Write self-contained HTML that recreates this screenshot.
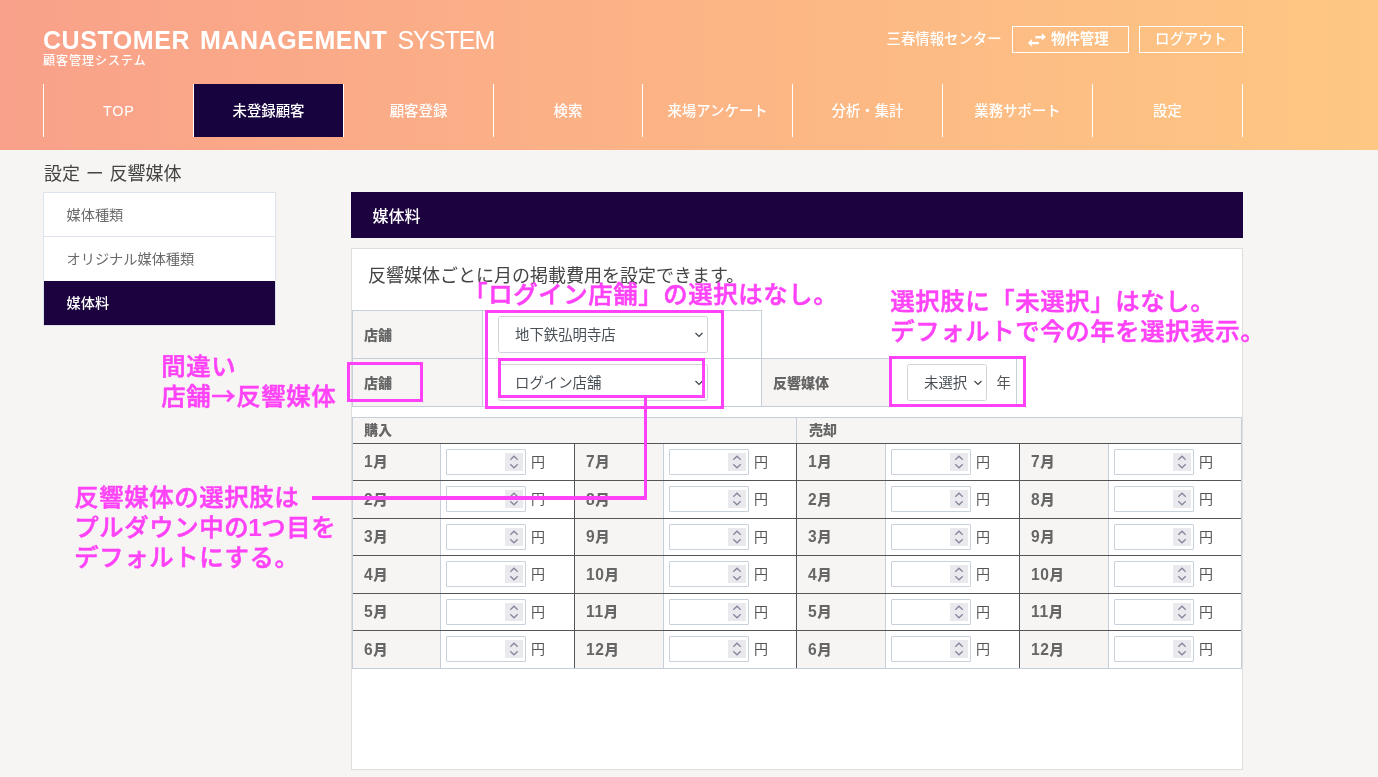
<!DOCTYPE html>
<html lang="ja">
<head>
<meta charset="utf-8">
<title>顧客管理システム</title>
<style>
*{box-sizing:border-box;margin:0;padding:0}
html,body{width:1378px;height:777px;overflow:hidden}
body{position:relative;background:#f7f5f3;font-family:"Liberation Sans","Noto Sans CJK JP",sans-serif;color:#333;font-size:14px}
.abs{position:absolute}
#w{position:absolute;left:0;top:0;width:1378px;height:777px;will-change:transform}
#hdr{left:0;top:0;width:1378px;height:150px;background:linear-gradient(90deg,#f9a18a 0%,#fcb685 55%,#fec783 100%)}
#logo{left:43px;top:26px;color:#fff;font-size:25px;line-height:29px;font-weight:bold;letter-spacing:.55px;word-spacing:2.5px;white-space:nowrap}
#logo span{font-weight:normal;letter-spacing:-1px}
#sub{left:43px;top:54px;color:#fff;font-size:12px;font-weight:500;line-height:14px;letter-spacing:1px;white-space:nowrap}
#uname{left:886.5px;top:29px;color:#fff;font-size:14.4px;font-weight:500;line-height:20px;white-space:nowrap}
.hbtn{top:26px;height:27px;border:1px solid #fff;color:#fff;font-size:14.4px;font-weight:500;line-height:25px;text-align:center;white-space:nowrap}
#nav{left:43px;top:84px;height:53px;width:1200px;border-left:1px solid #fff}
#nav div{position:absolute;top:0;height:53px;width:150px;border-right:1px solid #fff;color:#fff;font-size:14.4px;font-weight:500;line-height:55px;text-align:center}
#nav div.on{background:#17043f}
#ptitle{left:44px;top:161px;font-size:18px;line-height:27px;color:#444;word-spacing:.75px;white-space:nowrap}
#side{left:43px;top:192px;width:233px;height:134px;background:#fff;border:1px solid #dde3ea}
#side div{position:absolute;left:0;width:231px;height:44px;line-height:44px;padding-left:22.5px;color:#6a6a6a;font-size:14.2px}
#side div.on{background:#1c033f;color:#fff;font-weight:500}
#bar{left:351px;top:192px;width:892px;height:46px;background:#1c033f;color:#fff;font-size:16px;font-weight:500;line-height:49px;padding-left:21.5px}
#panel{left:351px;top:248px;width:892px;height:522px;background:#fff;border:1px solid #dedede}
#desc{left:368px;top:263px;font-size:18px;line-height:27px;color:#444;white-space:nowrap}

.ftab{border:1px solid #c6cfd9;background:#fff}
.flab{background:#f7f5f3;color:#666;font-weight:900;font-size:14px;line-height:20px;padding:14px 0 0 11px;border-right:1px solid #c6cfd9}
.sel{border:1px solid #ced4da;border-radius:2.5px;background:#fff;height:37px;color:#495057;font-size:14.4px;line-height:37px;padding-left:16px;white-space:nowrap}
.chev{fill:none;stroke:#3c4248;stroke-width:1.15}
.mh{background:#f7f5f3;color:#666;font-weight:900;font-size:14px;line-height:25px;padding-left:11px;height:26px;top:417px;border-top:1px solid #c6cfd9}
.ml b{font-size:15.6px;letter-spacing:.6px;font-weight:bold}
.ml{background:#f7f5f3;color:#666;font-weight:900;font-size:14.4px;line-height:36px;padding-left:11px;height:37px;width:88px;border-right:1px solid #c6cfd9}
.inp{border:1px solid #c9d2dc;border-radius:1px;background:#fff;width:80px;height:26px}
.spn{background:#e9e9ee;width:18px;height:18px}
.yen{color:#555;font-size:14px;line-height:20px}
.hl{background:#555;height:1px}
.vl{background:#555;width:1px}
.pk{color:#ff42f8;font-weight:500;-webkit-text-stroke:.55px #ff42f8;font-size:24.4px;letter-spacing:.6px;margin-left:.3px;line-height:30px;white-space:nowrap}
.ar{font-family:"Noto Sans CJK JP",sans-serif;line-height:0}
.pb{border:3px solid #ff42f8}
.pf{background:#ff42f8}
</style>
</head>
<body>
<div id="w">
<div id="hdr" class="abs"></div>
<div id="logo" class="abs">CUSTOMER MANAGEMENT <span>SYSTEM</span></div>
<div id="sub" class="abs">顧客管理システム</div>
<div id="uname" class="abs">三春情報センター</div>
<div class="abs hbtn" style="left:1012px;width:117px;font-weight:bold;padding-left:38px;text-align:left">物件管理</div>
<svg class="abs" style="left:1027px;top:32px" width="20" height="16" viewBox="0 0 20 16" fill="#fff"><rect x="8.3" y="4" width="7" height="2.4"/><path d="M14.8 1.1L18.9 5.1L14.8 8.8Z"/><rect x="4.6" y="9.9" width="7.3" height="2.4"/><path d="M4.8 7L0.9 11L4.8 14.8Z"/></svg>
<div class="abs hbtn" style="left:1139px;width:104px">ログアウト</div>
<div id="nav" class="abs">
<div style="left:0;letter-spacing:.8px;text-indent:.8px">TOP</div>
<div style="left:150px" class="on">未登録顧客</div>
<div style="left:300px">顧客登録</div>
<div style="left:450px;width:149px">検索</div>
<div style="left:599px;width:150px">来場アンケート</div>
<div style="left:749px">分析・集計</div>
<div style="left:899px">業務サポート</div>
<div style="left:1049px">設定</div>
</div>
<div id="ptitle" class="abs">設定 ー 反響媒体</div>
<div id="side" class="abs">
<div style="top:0;border-bottom:1px solid #dde3ea">媒体種類</div>
<div style="top:44px">オリジナル媒体種類</div>
<div style="top:88px" class="on">媒体料</div>
</div>
<div id="bar" class="abs">媒体料</div>
<div id="panel" class="abs"></div>
<div id="desc" class="abs">反響媒体ごとに月の掲載費用を設定できます。</div>

<div class="abs ftab" style="left:352px;top:310px;width:410px;height:97px"></div>
<div class="abs ftab" style="left:761px;top:358px;width:256px;height:49px"></div>
<div class="abs" style="left:353px;top:358px;width:664px;height:1px;background:#c6cfd9"></div>
<div class="abs flab" style="left:353px;top:311px;width:130px;height:47px">店舗</div>
<div class="abs flab" style="left:353px;top:359px;width:130px;height:47px">店舗</div>
<div class="abs flab" style="left:762px;top:359px;width:129px;height:47px">反響媒体</div>
<div class="abs sel" style="left:498px;top:316px;width:210px">地下鉄弘明寺店</div>
<div class="abs sel" style="left:498px;top:364px;width:210px">ログイン店舗</div>
<div class="abs sel" style="left:907px;top:364px;width:80px">未選択</div>
<svg class="abs" style="left:694px;top:331px" width="10" height="8" viewBox="0 0 10 8"><path class="chev" d="M1.5 2L5 5.5L8.5 2"/></svg>
<svg class="abs" style="left:694px;top:379px" width="10" height="8" viewBox="0 0 10 8"><path class="chev" d="M1.5 2L5 5.5L8.5 2"/></svg>
<svg class="abs" style="left:973px;top:379px" width="10" height="8" viewBox="0 0 10 8"><path class="chev" d="M1.5 2L5 5.5L8.5 2"/></svg>
<div class="abs yen" style="left:996.5px;top:373px;font-size:14.4px">年</div>

<!--TB-->
<div class="abs" style="left:352px;top:417px;width:890px;height:252px;background:#fff;border:1px solid #c6cfd9"></div>
<div class="abs mh" style="left:353px;width:443px">購入</div>
<div class="abs mh" style="left:796px;width:445px;border-left:1px solid #c6cfd9;padding-left:12px">売却</div>
<div class="abs ml" style="left:353px;top:444px;height:36px;line-height:36px;width:88px"><b>1</b>月</div>
<div class="abs inp" style="left:446px;top:449px"></div>
<div class="abs spn" style="left:505px;top:453px"></div>
<svg class="abs" style="left:509px;top:455px" width="10" height="14" viewBox="0 0 10 14"><path d="M1.3 4.8L5 1.2L8.7 4.8M1.3 9.2L5 12.8L8.7 9.2" fill="none" stroke="#85859a" stroke-width="1.2"/></svg>
<div class="abs yen" style="left:531px;top:452px">円</div>
<div class="abs ml" style="left:575px;top:444px;height:36px;line-height:36px;width:89px"><b>7</b>月</div>
<div class="abs inp" style="left:669px;top:449px"></div>
<div class="abs spn" style="left:728px;top:453px"></div>
<svg class="abs" style="left:732px;top:455px" width="10" height="14" viewBox="0 0 10 14"><path d="M1.3 4.8L5 1.2L8.7 4.8M1.3 9.2L5 12.8L8.7 9.2" fill="none" stroke="#85859a" stroke-width="1.2"/></svg>
<div class="abs yen" style="left:754px;top:452px">円</div>
<div class="abs ml" style="left:797px;top:444px;height:36px;line-height:36px;width:89px"><b>1</b>月</div>
<div class="abs inp" style="left:891px;top:449px"></div>
<div class="abs spn" style="left:950px;top:453px"></div>
<svg class="abs" style="left:954px;top:455px" width="10" height="14" viewBox="0 0 10 14"><path d="M1.3 4.8L5 1.2L8.7 4.8M1.3 9.2L5 12.8L8.7 9.2" fill="none" stroke="#85859a" stroke-width="1.2"/></svg>
<div class="abs yen" style="left:976px;top:452px">円</div>
<div class="abs ml" style="left:1020px;top:444px;height:36px;line-height:36px;width:89px"><b>7</b>月</div>
<div class="abs inp" style="left:1114px;top:449px"></div>
<div class="abs spn" style="left:1173px;top:453px"></div>
<svg class="abs" style="left:1177px;top:455px" width="10" height="14" viewBox="0 0 10 14"><path d="M1.3 4.8L5 1.2L8.7 4.8M1.3 9.2L5 12.8L8.7 9.2" fill="none" stroke="#85859a" stroke-width="1.2"/></svg>
<div class="abs yen" style="left:1199px;top:452px">円</div>
<div class="abs ml" style="left:353px;top:481px;height:37px;line-height:37px;width:88px"><b>2</b>月</div>
<div class="abs inp" style="left:446px;top:486px"></div>
<div class="abs spn" style="left:505px;top:490px"></div>
<svg class="abs" style="left:509px;top:492px" width="10" height="14" viewBox="0 0 10 14"><path d="M1.3 4.8L5 1.2L8.7 4.8M1.3 9.2L5 12.8L8.7 9.2" fill="none" stroke="#85859a" stroke-width="1.2"/></svg>
<div class="abs yen" style="left:531px;top:489px">円</div>
<div class="abs ml" style="left:575px;top:481px;height:37px;line-height:37px;width:89px"><b>8</b>月</div>
<div class="abs inp" style="left:669px;top:486px"></div>
<div class="abs spn" style="left:728px;top:490px"></div>
<svg class="abs" style="left:732px;top:492px" width="10" height="14" viewBox="0 0 10 14"><path d="M1.3 4.8L5 1.2L8.7 4.8M1.3 9.2L5 12.8L8.7 9.2" fill="none" stroke="#85859a" stroke-width="1.2"/></svg>
<div class="abs yen" style="left:754px;top:489px">円</div>
<div class="abs ml" style="left:797px;top:481px;height:37px;line-height:37px;width:89px"><b>2</b>月</div>
<div class="abs inp" style="left:891px;top:486px"></div>
<div class="abs spn" style="left:950px;top:490px"></div>
<svg class="abs" style="left:954px;top:492px" width="10" height="14" viewBox="0 0 10 14"><path d="M1.3 4.8L5 1.2L8.7 4.8M1.3 9.2L5 12.8L8.7 9.2" fill="none" stroke="#85859a" stroke-width="1.2"/></svg>
<div class="abs yen" style="left:976px;top:489px">円</div>
<div class="abs ml" style="left:1020px;top:481px;height:37px;line-height:37px;width:89px"><b>8</b>月</div>
<div class="abs inp" style="left:1114px;top:486px"></div>
<div class="abs spn" style="left:1173px;top:490px"></div>
<svg class="abs" style="left:1177px;top:492px" width="10" height="14" viewBox="0 0 10 14"><path d="M1.3 4.8L5 1.2L8.7 4.8M1.3 9.2L5 12.8L8.7 9.2" fill="none" stroke="#85859a" stroke-width="1.2"/></svg>
<div class="abs yen" style="left:1199px;top:489px">円</div>
<div class="abs ml" style="left:353px;top:519px;height:36px;line-height:36px;width:88px"><b>3</b>月</div>
<div class="abs inp" style="left:446px;top:524px"></div>
<div class="abs spn" style="left:505px;top:528px"></div>
<svg class="abs" style="left:509px;top:530px" width="10" height="14" viewBox="0 0 10 14"><path d="M1.3 4.8L5 1.2L8.7 4.8M1.3 9.2L5 12.8L8.7 9.2" fill="none" stroke="#85859a" stroke-width="1.2"/></svg>
<div class="abs yen" style="left:531px;top:527px">円</div>
<div class="abs ml" style="left:575px;top:519px;height:36px;line-height:36px;width:89px"><b>9</b>月</div>
<div class="abs inp" style="left:669px;top:524px"></div>
<div class="abs spn" style="left:728px;top:528px"></div>
<svg class="abs" style="left:732px;top:530px" width="10" height="14" viewBox="0 0 10 14"><path d="M1.3 4.8L5 1.2L8.7 4.8M1.3 9.2L5 12.8L8.7 9.2" fill="none" stroke="#85859a" stroke-width="1.2"/></svg>
<div class="abs yen" style="left:754px;top:527px">円</div>
<div class="abs ml" style="left:797px;top:519px;height:36px;line-height:36px;width:89px"><b>3</b>月</div>
<div class="abs inp" style="left:891px;top:524px"></div>
<div class="abs spn" style="left:950px;top:528px"></div>
<svg class="abs" style="left:954px;top:530px" width="10" height="14" viewBox="0 0 10 14"><path d="M1.3 4.8L5 1.2L8.7 4.8M1.3 9.2L5 12.8L8.7 9.2" fill="none" stroke="#85859a" stroke-width="1.2"/></svg>
<div class="abs yen" style="left:976px;top:527px">円</div>
<div class="abs ml" style="left:1020px;top:519px;height:36px;line-height:36px;width:89px"><b>9</b>月</div>
<div class="abs inp" style="left:1114px;top:524px"></div>
<div class="abs spn" style="left:1173px;top:528px"></div>
<svg class="abs" style="left:1177px;top:530px" width="10" height="14" viewBox="0 0 10 14"><path d="M1.3 4.8L5 1.2L8.7 4.8M1.3 9.2L5 12.8L8.7 9.2" fill="none" stroke="#85859a" stroke-width="1.2"/></svg>
<div class="abs yen" style="left:1199px;top:527px">円</div>
<div class="abs ml" style="left:353px;top:556px;height:37px;line-height:37px;width:88px"><b>4</b>月</div>
<div class="abs inp" style="left:446px;top:561px"></div>
<div class="abs spn" style="left:505px;top:565px"></div>
<svg class="abs" style="left:509px;top:567px" width="10" height="14" viewBox="0 0 10 14"><path d="M1.3 4.8L5 1.2L8.7 4.8M1.3 9.2L5 12.8L8.7 9.2" fill="none" stroke="#85859a" stroke-width="1.2"/></svg>
<div class="abs yen" style="left:531px;top:564px">円</div>
<div class="abs ml" style="left:575px;top:556px;height:37px;line-height:37px;width:89px"><b>10</b>月</div>
<div class="abs inp" style="left:669px;top:561px"></div>
<div class="abs spn" style="left:728px;top:565px"></div>
<svg class="abs" style="left:732px;top:567px" width="10" height="14" viewBox="0 0 10 14"><path d="M1.3 4.8L5 1.2L8.7 4.8M1.3 9.2L5 12.8L8.7 9.2" fill="none" stroke="#85859a" stroke-width="1.2"/></svg>
<div class="abs yen" style="left:754px;top:564px">円</div>
<div class="abs ml" style="left:797px;top:556px;height:37px;line-height:37px;width:89px"><b>4</b>月</div>
<div class="abs inp" style="left:891px;top:561px"></div>
<div class="abs spn" style="left:950px;top:565px"></div>
<svg class="abs" style="left:954px;top:567px" width="10" height="14" viewBox="0 0 10 14"><path d="M1.3 4.8L5 1.2L8.7 4.8M1.3 9.2L5 12.8L8.7 9.2" fill="none" stroke="#85859a" stroke-width="1.2"/></svg>
<div class="abs yen" style="left:976px;top:564px">円</div>
<div class="abs ml" style="left:1020px;top:556px;height:37px;line-height:37px;width:89px"><b>10</b>月</div>
<div class="abs inp" style="left:1114px;top:561px"></div>
<div class="abs spn" style="left:1173px;top:565px"></div>
<svg class="abs" style="left:1177px;top:567px" width="10" height="14" viewBox="0 0 10 14"><path d="M1.3 4.8L5 1.2L8.7 4.8M1.3 9.2L5 12.8L8.7 9.2" fill="none" stroke="#85859a" stroke-width="1.2"/></svg>
<div class="abs yen" style="left:1199px;top:564px">円</div>
<div class="abs ml" style="left:353px;top:594px;height:36px;line-height:36px;width:88px"><b>5</b>月</div>
<div class="abs inp" style="left:446px;top:599px"></div>
<div class="abs spn" style="left:505px;top:603px"></div>
<svg class="abs" style="left:509px;top:605px" width="10" height="14" viewBox="0 0 10 14"><path d="M1.3 4.8L5 1.2L8.7 4.8M1.3 9.2L5 12.8L8.7 9.2" fill="none" stroke="#85859a" stroke-width="1.2"/></svg>
<div class="abs yen" style="left:531px;top:602px">円</div>
<div class="abs ml" style="left:575px;top:594px;height:36px;line-height:36px;width:89px"><b>11</b>月</div>
<div class="abs inp" style="left:669px;top:599px"></div>
<div class="abs spn" style="left:728px;top:603px"></div>
<svg class="abs" style="left:732px;top:605px" width="10" height="14" viewBox="0 0 10 14"><path d="M1.3 4.8L5 1.2L8.7 4.8M1.3 9.2L5 12.8L8.7 9.2" fill="none" stroke="#85859a" stroke-width="1.2"/></svg>
<div class="abs yen" style="left:754px;top:602px">円</div>
<div class="abs ml" style="left:797px;top:594px;height:36px;line-height:36px;width:89px"><b>5</b>月</div>
<div class="abs inp" style="left:891px;top:599px"></div>
<div class="abs spn" style="left:950px;top:603px"></div>
<svg class="abs" style="left:954px;top:605px" width="10" height="14" viewBox="0 0 10 14"><path d="M1.3 4.8L5 1.2L8.7 4.8M1.3 9.2L5 12.8L8.7 9.2" fill="none" stroke="#85859a" stroke-width="1.2"/></svg>
<div class="abs yen" style="left:976px;top:602px">円</div>
<div class="abs ml" style="left:1020px;top:594px;height:36px;line-height:36px;width:89px"><b>11</b>月</div>
<div class="abs inp" style="left:1114px;top:599px"></div>
<div class="abs spn" style="left:1173px;top:603px"></div>
<svg class="abs" style="left:1177px;top:605px" width="10" height="14" viewBox="0 0 10 14"><path d="M1.3 4.8L5 1.2L8.7 4.8M1.3 9.2L5 12.8L8.7 9.2" fill="none" stroke="#85859a" stroke-width="1.2"/></svg>
<div class="abs yen" style="left:1199px;top:602px">円</div>
<div class="abs ml" style="left:353px;top:631px;height:37px;line-height:37px;width:88px"><b>6</b>月</div>
<div class="abs inp" style="left:446px;top:636px"></div>
<div class="abs spn" style="left:505px;top:640px"></div>
<svg class="abs" style="left:509px;top:642px" width="10" height="14" viewBox="0 0 10 14"><path d="M1.3 4.8L5 1.2L8.7 4.8M1.3 9.2L5 12.8L8.7 9.2" fill="none" stroke="#85859a" stroke-width="1.2"/></svg>
<div class="abs yen" style="left:531px;top:639px">円</div>
<div class="abs ml" style="left:575px;top:631px;height:37px;line-height:37px;width:89px"><b>12</b>月</div>
<div class="abs inp" style="left:669px;top:636px"></div>
<div class="abs spn" style="left:728px;top:640px"></div>
<svg class="abs" style="left:732px;top:642px" width="10" height="14" viewBox="0 0 10 14"><path d="M1.3 4.8L5 1.2L8.7 4.8M1.3 9.2L5 12.8L8.7 9.2" fill="none" stroke="#85859a" stroke-width="1.2"/></svg>
<div class="abs yen" style="left:754px;top:639px">円</div>
<div class="abs ml" style="left:797px;top:631px;height:37px;line-height:37px;width:89px"><b>6</b>月</div>
<div class="abs inp" style="left:891px;top:636px"></div>
<div class="abs spn" style="left:950px;top:640px"></div>
<svg class="abs" style="left:954px;top:642px" width="10" height="14" viewBox="0 0 10 14"><path d="M1.3 4.8L5 1.2L8.7 4.8M1.3 9.2L5 12.8L8.7 9.2" fill="none" stroke="#85859a" stroke-width="1.2"/></svg>
<div class="abs yen" style="left:976px;top:639px">円</div>
<div class="abs ml" style="left:1020px;top:631px;height:37px;line-height:37px;width:89px"><b>12</b>月</div>
<div class="abs inp" style="left:1114px;top:636px"></div>
<div class="abs spn" style="left:1173px;top:640px"></div>
<svg class="abs" style="left:1177px;top:642px" width="10" height="14" viewBox="0 0 10 14"><path d="M1.3 4.8L5 1.2L8.7 4.8M1.3 9.2L5 12.8L8.7 9.2" fill="none" stroke="#85859a" stroke-width="1.2"/></svg>
<div class="abs yen" style="left:1199px;top:639px">円</div>
<div class="abs hl" style="left:353px;top:443px;width:888px"></div>
<div class="abs hl" style="left:353px;top:480px;width:888px"></div>
<div class="abs hl" style="left:353px;top:518px;width:888px"></div>
<div class="abs hl" style="left:353px;top:555px;width:888px"></div>
<div class="abs hl" style="left:353px;top:593px;width:888px"></div>
<div class="abs hl" style="left:353px;top:630px;width:888px"></div>
<div class="abs vl" style="left:574px;top:443px;height:225px"></div>
<div class="abs vl" style="left:796px;top:443px;height:225px"></div>
<div class="abs vl" style="left:1019px;top:443px;height:225px"></div>
<!--/TB-->

<div class="abs pk" style="left:463px;top:280px">「ログイン店舗」の選択はなし。</div>
<div class="abs pk" style="left:890px;top:286.5px">選択肢に「未選択」はなし。<br>デフォルトで今の年を選択表示。</div>
<div class="abs pk" style="left:161px;top:352px">間違い<br>店舗<span class="ar">→</span>反響媒体</div>
<div class="abs pk" style="left:74px;top:483px">反響媒体の選択肢は<br>プルダウン中の<b style="-webkit-text-stroke:0;margin:0 -1.2px 0 -1px">1</b>つ目を<br>デフォルトにする。</div>
<div class="abs pb" style="left:346.5px;top:361.5px;width:76px;height:40px"></div>
<div class="abs pb" style="left:485px;top:310px;width:238.6px;height:99.3px"></div>
<div class="abs pb" style="left:498px;top:357.6px;width:207.4px;height:40.7px"></div>
<div class="abs pb" style="left:889px;top:355.5px;width:136.5px;height:51.5px"></div>
<div class="abs pf" style="left:643.8px;top:397px;width:3.3px;height:102.8px;border-radius:0 0 1.6px 1.6px"></div>
<div class="abs pf" style="left:312.4px;top:496.4px;width:334.7px;height:3.4px;border-radius:0 1.6px 1.6px 0"></div>

</div>
</body>
</html>
